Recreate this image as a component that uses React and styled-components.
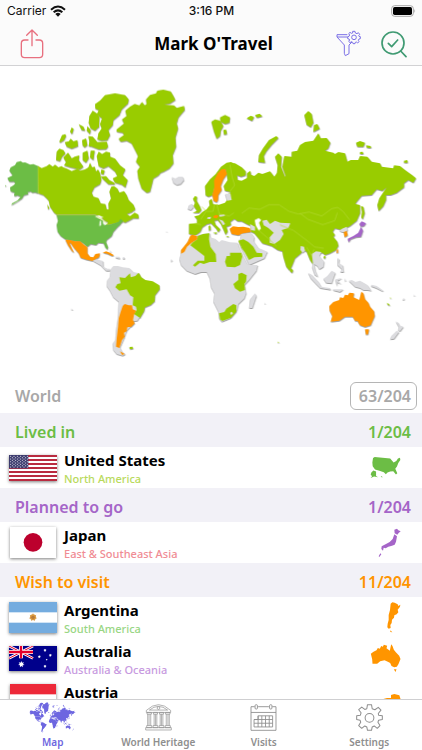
import React from "react";
import styled, { createGlobalStyle } from "styled-components";

const GlobalStyle = createGlobalStyle`
  * {
    box-sizing: border-box;
  }
  body {
    margin: 0;
    background: #ffffff;
    font-family: "Chalkboard SE", "Noto Sans", sans-serif;
  }
  button {
    border: 0;
    padding: 0;
    background: none;
    font: inherit;
    color: inherit;
    cursor: pointer;
  }
  svg {
    display: block;
  }
`;

const Screen = styled.div`
  display: flex;
  flex-direction: column;
  height: 100vh;
  overflow: hidden;
`;

const Header = styled.header`
  flex: none;
  background: #fbfbfb;
  border-bottom: 1px solid #d2d2d4;
`;

const StatusBar = styled.div`
  display: grid;
  grid-template-columns: 1fr auto 1fr;
  align-items: center;
  height: 22px;
  padding: 0 6px 0 7px;
  font-family: Inter, sans-serif;
  font-size: 12px;
  line-height: 16px;
  color: #111111;
`;

const Carrier = styled.div`
  display: flex;
  align-items: center;
  gap: 4px;
`;

const Clock = styled.div`
  font-weight: 500;
`;

const Battery = styled.div`
  justify-self: end;
`;

const NavBar = styled.div`
  display: grid;
  grid-template-columns: 1fr auto 1fr;
  align-items: center;
  height: 43px;
  padding: 0 15px 0 20px;
`;

const Title = styled.h1`
  margin: 0;
  font-size: 17px;
  line-height: 24px;
  font-weight: 700;
  color: #000000;
`;

const NavActions = styled.div`
  display: flex;
  justify-content: flex-end;
  align-items: center;
  gap: 20px;
`;

const IconButton = styled.button`
  justify-self: start;
  color: ${(props) => props.$color};
`;

const Content = styled.main`
  flex: 1;
  min-height: 0;
  overflow-y: auto;
  scrollbar-width: none;
`;

const MapSvg = styled.svg`
  width: 100%;
  height: auto;

  .land {
    filter: drop-shadow(1px 3px 0 #a3a3a3);
  }
`;

const SectionHeader = styled.div`
  display: flex;
  justify-content: space-between;
  align-items: center;
  height: 34px;
  padding: ${(props) => (props.$plain ? "0 5px 0 15px" : "3px 11px 0 15px")};
  background: ${(props) => (props.$plain ? "#ffffff" : "#f2f1f7")};
  color: ${(props) => props.$color};
`;

const SectionTitle = styled.h2`
  margin: 0;
  font-size: 16px;
  line-height: 24px;
  font-weight: 600;
`;

const Count = styled.span`
  font-size: 16px;
  line-height: 24px;
  font-weight: 600;
`;

const CountButton = styled.button`
  min-width: 67px;
  height: 28px;
  padding: 0 5px;
  border: 1px solid #b5b5b5;
  border-radius: 6px;
  font-size: 16px;
  line-height: 24px;
  font-weight: 600;
  text-align: right;
`;

const CountryList = styled.ul`
  list-style: none;
  margin: 0;
  padding: 0;
`;

const CountryRow = styled.li`
  display: flex;
  align-items: center;
  height: 41px;
  padding: 0 21px 0 8px;
  background: #ffffff;
`;

const FlagBox = styled.div`
  display: flex;
  justify-content: center;
  width: 49px;
  margin-right: 7px;
`;

const FlagSvg = styled.svg`
  box-shadow: 0 1px 3px rgba(0, 0, 0, 0.5);
`;

const CountryText = styled.div`
  flex: 1;
`;

const CountryName = styled.div`
  font-size: 15px;
  line-height: 21px;
  font-weight: 700;
  color: #000000;
`;

const Region = styled.div`
  font-size: 11px;
  line-height: 15px;
  font-weight: 500;
  color: ${(props) => props.$color};
`;

const TabBar = styled.nav`
  flex: none;
  display: grid;
  grid-template-columns: repeat(4, 1fr);
  height: 51px;
  background: #ffffff;
  border-top: 1px solid #cfcfd1;
`;

const Tab = styled.button`
  display: flex;
  flex-direction: column;
  align-items: center;
  color: ${(props) => (props.$active ? "#6d66e0" : "#8e8e8e")};
`;

const TabIcon = styled.span`
  display: flex;
  align-items: center;
  height: 35px;
`;

const TabLabel = styled.span`
  font-size: 10px;
  line-height: 14px;
  font-weight: 600;
`;

const colors = {
  green: "#99cc00",
  lived: "#6cbd45",
  planned: "#a565c8",
  wish: "#ff9500",
  grey: "#dcdcdf",
};

/* land shapes, drawn in tiles; [colour, path] */
const tiles = [
  {
    x: 0,
    y: 240,
    shapes: [
      ["lived", "M22 294L38 286 28 272 32 262 45 255 50 246 62 243 68 248 75 247 90 254 100 252 114 258 115 340 105 337 97 338 92 334 82 336 85 342 72 345 66 355 52 365 34 375 36 370 52 362 62 350 52 346 44 348 42 345 44 338 32 334 30 322 40 316 46 310 42 305 28 305ZM15 315l4 2-2 3Z"],
      ["green", "M114 258L125 264 140 258 148 252 158 260 165 254 175 262 184 258 190 262 200 266 215 273 232 266 240 272 255 268 265 262 270 248 276 262 284 260 288 275 294 268 300 280 304 300 300 312 283 322 275 338 280 350 295 354 302 370 316 372 320 388 326 388 325 370 333 355 328 335 334 320 342 318 352 326 358 338 372 333 380 345 386 360 400 374 406 388 395 396 380 402 390 408 404 398 415 404 416 415 400 414 387 422 375 428 370 425 355 428 330 434 316 436 325 428 312 420 302 410 285 404 170 404 162 398 150 380 146 362 140 355 130 345 115 340Z"],
      ["green", "M142 372l6 12-4 4ZM285 72L300 62 315 45 345 40 375 45 386 58 384 70 365 88 358 105 340 120 338 135 325 150 330 165 322 180 305 182 292 178 295 160 305 145 300 132 306 115 290 104 296 90 286 86Z"],
      ["green", "M268 108L278 92 290 100 298 112 297 140 285 152 272 145 266 128Z"],
      ["green", "M265 168L278 170 292 186 320 185 324 200 318 207 296 208 275 200 268 185ZM236 132L250 140 255 152 245 150ZM262 138L272 150 270 162 260 152ZM246 180L258 175 262 195 254 202 248 197ZM268 184l8 4-2 12-8-2Z"],
      ["green", "M178 184L186 165 196 162 198 168 192 180 180 188ZM194 186L206 184 212 176 220 184 232 180 234 198 215 206 200 200ZM210 155L215 142 221 147 216 162Z"],
      ["green", "M170 215L178 206 190 210 196 220 186 230 180 243 168 240ZM204 218L215 235 224 230 238 226 236 240 250 260 240 268 212 262 192 256 198 246 190 232ZM248 218L262 212 266 235 258 248 248 240ZM272 212L284 212 280 240 270 232Z"],
      ["green", "M290 228L296 215 306 222 318 215 330 218 330 230 345 236 360 256 376 268 368 285 383 300 376 322 365 314 345 308 338 295 352 288 345 275 325 258 310 265 296 258ZM302 290L318 288 328 300 342 308 345 313 325 312 312 300ZM304 268l10 4-4 12-8-4Z"],
    ],
  },
  {
    x: 330,
    y: 240,
    shapes: [
      ["green", "M20 148L42 130 36 118 50 108 46 92 60 80 74 72 88 76 96 66 104 76 110 72 108 58 120 45 138 40 142 32 160 29 182 34 190 48 196 60 180 70 162 74 192 76 200 84 222 78 224 90 205 112 200 130 204 145 196 172 198 200 188 225 190 250 178 265 160 275 152 278 145 286 130 295 126 312 120 335 110 338 95 325 85 295 82 272 90 260 78 245 84 228 75 210 65 190 50 182 32 185 26 176 42 165 38 158 20 155Z"],
      ["green", "M304 125L315 118 330 122 340 138 332 152 330 168 320 176 312 155ZM330 112L345 105 360 112 358 128 345 132 332 125ZM340 150L348 148 351 162 342 164Z"],
      ["grey", "M185 291L196 296 206 290 218 290 222 300 212 312 200 315 190 308Z"],
    ],
  },
  {
    x: 90,
    y: 570,
    shapes: [
      ["lived", "M80 75L195 75 204 84 222 94 224 104 240 104 265 96 272 86 279 93 270 104 262 112 250 125 245 138 230 150 228 156 234 172 232 179 226 172 221 160 205 158 198 165 182 162 172 170 160 160 150 154 130 152 118 150 106 148 92 138 83 125 80 105 84 92Z"],
      ["wish", "M106 149L120 150 134 154 150 154 162 164 172 172 172 190 180 200 190 202 196 192 210 190 207 202 196 208 188 213 170 209 152 203 146 190 134 176 122 160 118 158 126 176 132 188 126 184 114 166Z"],
      ["grey", "M188 212L200 208 219 213 220 230 232 236 240 236 240 242 228 242 212 226Z"],
      ["wish", "M218 188L228 184 240 188 252 196 246 198 232 191Z"],
      ["grey", "M256 200L268 200 270 206 258 204ZM240 180l4 5-3 1ZM278 202l6 0 0 4-6 0Z"],
      ["grey", "M242 238L250 228 264 228 278 232 298 234 310 246 328 250 328 270 320 350 330 380 322 392 308 394 300 412 290 422 282 445 270 472 276 484 286 492 278 497 260 492 250 480 248 460 256 450 258 420 264 380 266 335 250 322 240 302 230 288 232 270 240 260Z"],
      ["green", "M256 292L262 282 272 280 268 262 285 264 300 250 302 262 316 258 326 248 334 262 346 270 368 274 388 286 389 298 375 316 374 334 362 345 345 352 342 364 330 384 312 372 320 360 318 350 308 346 310 322 300 316 290 298 268 302Z"],
      ["wish", "M278 348L284 342 296 346 306 346 308 358 318 362 312 374 309 390 314 400 304 410 292 412 290 424 282 428 284 440 276 450 268 474 258 470 260 445 264 410 266 385 272 365ZM270 484L284 492 276 495Z"],
      ["green", "M298 471L308 470 309 476 300 478Z"],
      ["grey", "M122 356l7 1-3 3ZM408 124l4 1-2 2ZM422 208l5 2-3 6Z"],
    ],
  },
  {
    x: 525,
    y: 450,
    shapes: [
      ["green", "M92 136L90 108 105 88 122 72 138 50 155 38 168 36 180 42 176 50 152 60 135 65 122 95 116 120 112 136 100 140Z"],
      ["green", "M42 221L66 220 66 208 58 199 72 196 82 186 95 178 104 166 102 152 110 146 114 163 132 164 150 158 156 150 156 134 168 126 150 122 146 108 158 90 153 60 160 42 180 40 200 52 212 64 212 76 198 80 186 76 188 90 200 92 216 84 216 70 226 62 228 74 238 78 250 68 262 72 285 64 298 80 306 68 308 45 300 20 310 10 320 20 318 50 330 80 332 78 322 50 328 18 350 20 350 5 367 2 375-15 390-24 415-28 423-40 430-50 437-35 455-36 466-22 460-5 450 2 475 8 480 12 490 6 510 10 517 35 527 30 550 30 555 18 577 20 590 35 615 40 620 50 655 55 657 46 675 48 690 60 712 76 723 85 715 98 700 90 687 100 687 112 665 128 647 135 633 135 633 150 625 168 611 183 607 165 613 145 623 130 635 112 622 122 605 118 590 135 560 137 545 155 541 162 555 165 555 190 545 212 525 228 500 240 480 235 473 245 480 255 475 260 487 275 490 287 483 300 465 310 450 315 442 308 430 312 418 308 412 325 415 345 405 330 395 305 385 300 378 310 360 325 352 345 344 362 334 350 325 320 322 304 308 300 290 288 262 280 250 264 238 250 228 245 228 228 215 222 200 214 188 214 178 206 166 215 168 225 154 230 158 244 152 254 146 240 138 222 128 210 118 212 122 224 136 238 130 247 124 236 108 220 96 222 82 232 76 245 62 256 42 252Z"],
      ["wish", "M125 157L116 153 112 135 118 112 117 92 128 70 140 58 151 57 156 72 145 88 137 108 140 120 130 135 129 150Z"],
      ["green", "M53 188L66 182 56 168 60 158 54 146 60 138 66 140 65 152 74 168 79 180 72 188Z"],
      ["grey", "M38 177L42 165 52 161 55 172 48 180ZM150 132L166 130 170 150 156 152ZM98 202L108 200 106 207 96 206ZM132 194L148 193 150 198 134 200ZM132 208L144 212 150 222 144 226ZM225 222L240 230 240 242 228 240Z"],
      ["wish", "M115 198L124 194 131 198 126 205 116 204ZM164 236L174 229 190 231 205 230 224 234 228 246 205 250 190 256 170 252Z"],
      ["grey", "M262 212L275 209 285 222 300 212 316 218 346 220 340 234 320 240 326 252 315 270 298 282 284 278 284 262 296 248 280 234 266 226ZM198 252L228 248 238 262 236 275 215 278 195 270Z"],
      ["grey", "M192 268L215 272 235 272 250 294 260 298 277 305 268 325 222 345 208 315 196 290Z"],
      ["green", "M190 272L205 268 220 276 235 290 245 308 262 310 262 320 238 322 222 330 210 308 200 295Z"],
      ["grey", "M48 258L70 254 104 248 106 262 120 266 132 277 140 270 165 277 188 278 192 292 205 320 218 345 248 345 244 362 222 390 208 405 213 430 208 445 190 462 186 480 165 505 140 515 132 505 130 485 115 455 118 430 108 412 104 385 95 366 78 366 60 372 35 362 18 345 13 328 18 308 30 290 40 270Z"],
      ["wish", "M46 257L52 254 66 258 67 268 50 278 36 290 28 306 18 311 18 300 26 290 38 275Z"],
      ["green", "M68 258L84 252 103 250 102 268 106 290 122 312 124 336 104 336 86 342 75 338 60 350 54 346 68 332 88 332 88 318 46 286 52 278 67 268Z"],
      ["green", "M155 318L165 318 165 308 199 308 202 320 195 345 180 352 155 350 150 335ZM190 372L200 368 215 376 213 395 208 402 210 420 195 425 180 415 175 402 190 390Z"],
      ["green", "M132 490L148 486 154 476 175 462 184 466 184 485 168 503 142 513 135 508Z"],
      ["grey", "M165 488l6-3 3 6-6 4ZM225 448L240 430 244 438 232 474 222 474ZM268 458l4 1-2 3Z"],
      ["green", "M101 228L106 226 107 240 102 242ZM114 248L126 247 124 252ZM152 258l10 1-2 3Z"],
      ["green", "M250 36L252 15 264-5 282-30 304-42 310-36 290-16 274 4 266 18 270 38ZM215-95l12-8 10 4-6 12ZM240-105l14-4 8 8-16 4Z"],
      ["green", "M308 575l4 1-2 4Z"],
    ],
  },
  {
    x: 840,
    y: 300,
    shapes: [
      ["green", "M73 45L85 33 95 42 100 68 92 82 80 74ZM102 75L112 72 119 86 100 96ZM228 128L240 123 255 128 250 140 232 140ZM258 136L272 138 273 144 261 143ZM240 156L248 155 250 162 240 162ZM372 182L382 180 383 188 372 188Z"],
      ["green", "M243 318L250 320 254 340 248 358 244 352 246 335Z"],
    ],
  },
  {
    x: 840,
    y: 630,
    shapes: [
      ["grey", "M178 62L186 56 200 50 203 60 196 66 186 66ZM62 108L72 110 75 122 68 128 61 120Z"],
      ["wish", "M191 66L200 63 203 76 194 82ZM170 119L174 117 174 128 170 130Z"],
      ["planned", "M238 42L245 34 258 40 252 48 243 50ZM243 50L249 62 243 80 228 82 212 88 206 97 203 86 220 78 235 68 240 58Z"],
      ["grey", "M95 132L108 124 124 126 118 138 132 155 130 170 118 178 112 168 102 162 106 182 114 200 104 194 96 172 99 158Z"],
      ["grey", "M84 188L95 194 115 215 124 230 150 234 152 239 120 234 108 222 92 205ZM130 206L142 198 155 182 166 188 160 205 155 220 138 218ZM166 208L186 204 173 212 184 222 172 217 170 228ZM172 143L178 148 176 160 188 166 191 186 180 186 186 178 172 165ZM158 238L190 238 180 246 160 241ZM194 204l4 8-3 2Z"],
      ["grey", "M206 212L216 210 226 216 240 212 262 225 274 242 262 240 250 240 240 234 225 230ZM275 224L290 228 310 242 308 244 288 234 272 228ZM366 268l8-4-2 6ZM400 254l5 1-2 3Z"],
      ["green", "M32 174L39 180 37 189 30 184ZM132 138L137 138 135 146 131 144ZM320 278l7 4 3 5-6-2ZM330 262l3 2-2 3Z"],
      ["wish", "M148 288L160 276 178 270 180 262 190 264 195 254 204 256 208 248 222 250 220 262 238 270 244 245 250 250 255 268 265 278 270 290 282 304 284 318 272 346 255 351 240 346 232 332 226 334 218 320 195 320 178 332 152 335 157 318 149 302ZM255 358L267 358 264 373 258 374Z"],
      ["grey", "M347 334L355 338 358 346 370 350 360 364 354 360 356 350ZM350 362L357 366 342 386 330 388 334 378Z"],
    ],
  },
];

function Land({ mono }) {
  return tiles.map((tile, i) => (
    <g key={i} transform={`translate(${tile.x} ${tile.y})`}>
      {tile.shapes.map(([color, d]) => (
        <path key={d} d={d} fill={mono ? "currentColor" : colors[color]} />
      ))}
    </g>
  ));
}

function WorldMap() {
  return (
    <MapSvg viewBox="0 198 1266 939" role="img" aria-label="World map">
      <g className="land">
        <Land />
      </g>
      {/* lakes and inland seas */}
      <g fill="#ffffff">
        <path d="M285 650l12-4 14 6-14 3ZM299 664l4-4 0 16-5 2ZM308 660l9 6-2 10-5-4Z" />
        <path d="M764 660l12-6 8 6-7 8 6 18-7 6-9-16Z" />
      </g>
      {/* borders */}
      <g fill="none" stroke="#b3da33" strokeWidth="2">
        <path d="M114 498v82M170 645h115l36 24" />
        <path d="M725 640l22-16 32 4 28-14 30 0 30 20 28 8 32-6 38 12 30-22 18-4 16 12 20 26" />
        <path d="M900 640l24 18 44 16 36-12 8-24" />
        <path d="M690 494l6 36 8 26-16 20M605 620l14 14 20 0 4-20M650 612l8 30 30 6 14-10M618 634l-16 24M585 670l18 4" />
        <path d="M840 675l40 16 40 30 24 20 28 4M775 690l28 24 26 24M920 742l14 24 8-18" />
      </g>
    </MapSvg>
  );
}

const usShape =
  "M489 249L494 246 540 250 545 256 550 262 558 258 563 250 569 248 570 255 564 264 560 274 555 281 561 294 557 298 549 288 540 289 532 292 527 297 521 291 508 287 495 283 488 273 487 262ZM484 292L490 286 498 289 498 302 504 306 492 304 482 308 486 303 482 298ZM512 303l4 1 1 3-4-2Z";
const jpShape =
  "M552 461L560 458 564 463 571 466 565 471 561 476 553 472ZM552 475L560 481 557 497 553 506 545 509 534 512 526 517 520 515 518 524 513 519 514 511 527 504 538 498 547 489ZM510 532l3 3-6 8-2-2Z";
const arShape =
  "M541 44L546 40 553 41 562 46 564 51 570 47 569 53 562 62 564 70 559 76 552 79 551 86 545 92 544 102 540 108 541 117 535 119 531 115 532 104 535 93 535 78 539 63ZM540 124L546 130 540 129Z";
const auShape =
  "M482 194L490 188 499 184 503 177 509 179 513 171 518 173 521 167 531 170 529 178 539 185 543 166 547 171 551 182 557 190 567 200 571 210 565 225 560 233 552 235 544 231 540 222 533 218 523 214 510 217 501 224 487 224 486 211ZM551 241L559 241 556 249Z";
const atShape =
  "M519 321L530 318 542 318 542 309 552 306 567 310 571 322 566 332 545 337 531 330 520 330Z";

function star(cx, cy, r) {
  const points = [];
  for (let i = 0; i < 14; i++) {
    const a = (Math.PI * i) / 7 - Math.PI / 2;
    const k = i % 2 ? r / 2 : r;
    points.push(`${cx + k * Math.cos(a)},${cy + k * Math.sin(a)}`);
  }
  return <polygon key={`${cx}-${cy}`} points={points.join(" ")} />;
}

const starRows = [0, 1, 2, 3, 4, 5, 6, 7, 8];

const flags = {
  us: (
    <FlagSvg width="48" height="26" viewBox="0 0 144 78">
      <rect width="144" height="78" fill="#ffffff" />
      {[0, 12, 24, 36, 48, 60, 72].map((y) => (
        <rect key={y} y={y} width="144" height="6" fill="#b92b40" />
      ))}
      <rect width="58" height="40" fill="#3c3b6e" />
      {starRows.map((row) =>
        [0, 1, 2, 3, 4, 5].slice(row % 2).map((col) => (
          <circle
            key={`${row}-${col}`}
            cx={5 + col * 10 - (row % 2) * 5}
            cy={4 + row * 4}
            r="1.6"
            fill="#ffffff"
          />
        ))
      )}
    </FlagSvg>
  ),
  jp: (
    <FlagSvg width="46" height="31" viewBox="0 0 138 93">
      <rect width="138" height="93" fill="#ffffff" />
      <circle cx="69" cy="46" r="28" fill="#bc002d" />
    </FlagSvg>
  ),
  ar: (
    <FlagSvg width="48" height="31" viewBox="0 0 144 93">
      <rect width="144" height="93" fill="#74acdf" />
      <rect y="31" width="144" height="31" fill="#ffffff" />
      <g fill="#dba45c">{star(72, 46, 13)}</g>
      <circle cx="72" cy="46" r="9" fill="#d99a3f" />
      <circle cx="72" cy="46" r="5" fill="#b87a3a" />
    </FlagSvg>
  ),
  au: (
    <FlagSvg width="48" height="25" viewBox="0 0 144 75">
      <rect width="144" height="75" fill="#00008b" />
      <path d="M0 0L72 37M72 0L0 37" stroke="#ffffff" strokeWidth="8" />
      <path d="M0 0L72 37M72 0L0 37" stroke="#e4002b" strokeWidth="3" />
      <path d="M36 0V37M0 18H72" stroke="#ffffff" strokeWidth="12" />
      <path d="M36 0V37M0 18H72" stroke="#e4002b" strokeWidth="7" />
      <g fill="#ffffff">
        {star(37, 55, 10)}
        {star(108, 13, 5)}
        {star(91, 32, 5)}
        {star(124, 28, 5)}
        {star(113, 41, 3)}
        {star(108, 61, 5)}
      </g>
    </FlagSvg>
  ),
  at: (
    <FlagSvg width="46" height="31" viewBox="0 0 138 93">
      <rect width="138" height="93" fill="#ed2939" />
      <rect y="31" width="138" height="31" fill="#ffffff" />
    </FlagSvg>
  ),
};

const sections = [
  {
    title: "Lived in",
    count: "1/204",
    color: "#6cbd45",
    countries: [
      { name: "United States", region: "North America", regionColor: "#b9da5c", flag: "us", shape: usShape, box: [480, 243, 92, 68] },
    ],
  },
  {
    title: "Planned to go",
    count: "1/204",
    color: "#a565c8",
    countries: [
      { name: "Japan", region: "East & Southeast Asia", regionColor: "#f08c94", flag: "jp", shape: jpShape, box: [503, 456, 69, 90] },
    ],
  },
  {
    title: "Wish to visit",
    count: "11/204",
    color: "#ff9500",
    countries: [
      { name: "Argentina", region: "South America", regionColor: "#98d684", flag: "ar", shape: arShape, box: [530, 39, 42, 93] },
      { name: "Australia", region: "Australia & Oceania", regionColor: "#c79ae0", flag: "au", shape: auShape, box: [480, 165, 92, 87] },
      { name: "Austria", region: "Western Europe", regionColor: "#7fb8e6", flag: "at", shape: atShape, box: [518, 303, 54, 42] },
    ],
  },
];

function CountryShape({ shape, box, color }) {
  return (
    <svg
      width={Math.round(box[2] / 3)}
      height={Math.round(box[3] / 3)}
      viewBox={box.join(" ")}
      aria-hidden="true"
    >
      <path d={shape} fill={color} />
    </svg>
  );
}

const HeritageIcon = () => (
  <svg width="27" height="27" viewBox="0 0 80 80" fill="none" stroke="currentColor" strokeWidth="2">
    <path d="M4 19Q40-15 76 19V25H4ZM13 18Q40-4 67 18Z" />
    <circle cx="40" cy="12" r="4" />
    <path d="M6 25h13v5H6ZM25 25h12v5H25ZM43 25h12v5H43ZM61 25h13v5H61Z" />
    <path d="M8 30v34M12 30v34M17 30v34M27 30v34M31 30v34M35 30v34M45 30v34M49 30v34M53 30v34M63 30v34M68 30v34M72 30v34" />
    <path d="M5 64h15v6H5ZM24 64h14v6H24ZM42 64h14v6H42ZM60 64h15v6H60ZM2 70h76v7H2Z" />
  </svg>
);

const CalendarIcon = () => (
  <svg width="27" height="27" viewBox="0 0 80 80" fill="none" stroke="currentColor" strokeWidth="2.6">
    <path d="M14 8H3V78H77V8H66M24 8H56M3 25H77" />
    <rect x="15" y="2" width="7" height="13" rx="3" />
    <rect x="58" y="2" width="7" height="13" rx="3" />
    <path d="M24 35H67V68H12V46H24ZM12 46H67M12 57H67M24 35V68M35 35V68M46 35V68M57 35V68" />
  </svg>
);

const SettingsIcon = () => (
  <svg width="27" height="27" viewBox="0 0 80 80" fill="none" stroke="currentColor" strokeWidth="3" strokeLinejoin="round">
    <path d="M34 2H46L48 14L56 17L66 10L74 18L66 28L67 33L78 35V46L67 48L65 54L71 64L63 72L54 65L48 68L46 78H34L32 68L26 65L17 72L8 64L14 54L12 48L2 46V35L13 33L15 26L8 17L17 9L26 16L32 14Z" />
    <circle cx="40" cy="41" r="13" />
  </svg>
);

const MapIcon = () => (
  <svg width="47" height="31" viewBox="20 258 1232 830">
    <Land mono />
  </svg>
);

const tabs = [
  { name: "Map", icon: MapIcon },
  { name: "World Heritage", icon: HeritageIcon },
  { name: "Visits", icon: CalendarIcon },
  { name: "Settings", icon: SettingsIcon },
];

export default function App() {
  return (
    <Screen>
      <GlobalStyle />
      <Header>
        <StatusBar>
          <Carrier>
            Carrier
            <svg width="16" height="12" viewBox="0 0 48 36" aria-hidden="true">
              <g fill="none" stroke="#111111" strokeWidth="6">
                <path d="M3 14Q24-5 45 14" />
                <path d="M11 22Q24 10 37 22" />
              </g>
              <path d="M16 27Q24 20 32 27L24 35Z" fill="#111111" />
            </svg>
          </Carrier>
          <Clock>3:16 PM</Clock>
          <Battery>
            <svg width="25" height="12" viewBox="0 0 75 36" aria-hidden="true">
              <rect x="2" y="2" width="65" height="32" rx="9" fill="none" stroke="#a8a8a8" strokeWidth="3" />
              <rect x="6" y="6" width="57" height="24" rx="5" fill="#000000" />
              <path d="M70 12Q75 18 70 24Z" fill="#a8a8a8" />
            </svg>
          </Battery>
        </StatusBar>
        <NavBar>
          <IconButton $color="#e8707f" aria-label="Share">
            <svg width="24" height="30" viewBox="0 0 72 90" fill="none" stroke="currentColor" strokeWidth="4" strokeLinecap="round" strokeLinejoin="round">
              <path d="M24 33H14Q4 33 4 43V76Q4 86 14 86H58Q68 86 68 76V43Q68 33 58 33H48" />
              <path d="M36 50V4M20 19L36 3L52 19" />
            </svg>
          </IconButton>
          <Title>Mark O'Travel</Title>
          <NavActions>
            <IconButton $color="#7b70e6" aria-label="Filter">
              <svg width="25" height="27" viewBox="0 0 75 81" fill="none" stroke="currentColor" strokeWidth="3" strokeLinejoin="round">
                <path d="M34 14H3V21L25 45V70L28 77L39 71V45L48 36M3 21H34" />
                <path d="M50 4H57L58 9L63 11L67 8L71 13L68 17L69 19L73 20V26L69 27L67 31L69 35L65 39L61 36L58 37L57 41H51L50 37L46 35L42 38L38 34L41 30L39 27L35 26V20L39 19L41 15L38 11L42 7L46 10L50 9Z" />
                <circle cx="54" cy="22" r="7" />
              </svg>
            </IconButton>
            <IconButton $color="#3f9a72" aria-label="Search visited">
              <svg width="26" height="28" viewBox="0 0 78 84" fill="none" stroke="currentColor" strokeWidth="5" strokeLinecap="round" strokeLinejoin="round">
                <circle cx="36" cy="39" r="33" />
                <path d="M59 63L75 80M22 40L32 50L50 30" />
              </svg>
            </IconButton>
          </NavActions>
        </NavBar>
      </Header>

      <Content>
        <WorldMap />
        <SectionHeader $plain $color="#a8a8a8">
          <SectionTitle>World</SectionTitle>
          <CountButton>63/204</CountButton>
        </SectionHeader>
        {sections.map((section) => (
          <section key={section.title}>
            <SectionHeader $color={section.color}>
              <SectionTitle>{section.title}</SectionTitle>
              <Count>{section.count}</Count>
            </SectionHeader>
            <CountryList>
              {section.countries.map((country) => (
                <CountryRow key={country.name}>
                  <FlagBox>{flags[country.flag]}</FlagBox>
                  <CountryText>
                    <CountryName>{country.name}</CountryName>
                    <Region $color={country.regionColor}>{country.region}</Region>
                  </CountryText>
                  <CountryShape shape={country.shape} box={country.box} color={section.color} />
                </CountryRow>
              ))}
            </CountryList>
          </section>
        ))}
      </Content>

      <TabBar>
        {tabs.map(({ name, icon: Icon }, index) => (
          <Tab key={name} $active={index === 0} aria-current={index === 0 ? "page" : undefined}>
            <TabIcon>
              <Icon />
            </TabIcon>
            <TabLabel>{name}</TabLabel>
          </Tab>
        ))}
      </TabBar>
    </Screen>
  );
}
